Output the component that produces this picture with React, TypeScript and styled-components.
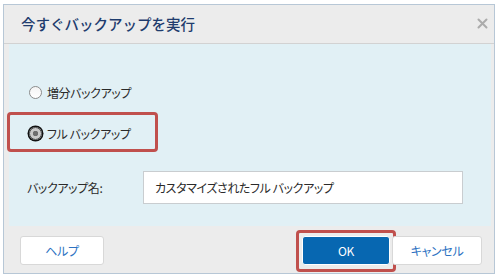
import React from 'react';
import styled, { createGlobalStyle } from 'styled-components';

const GlobalStyle = createGlobalStyle`
  html, body {
    margin: 0;
    padding: 0;
    background: #ffffff;
  }
  body {
    font-family: "Noto Sans CJK JP", "Noto Sans", sans-serif;
  }
`;

const Page = styled.div`
  width: 499px;
  height: 278px;
  padding: 4px 0 0 3px;
  box-sizing: border-box;
`;

const Dialog = styled.div`
  width: 492px;
  height: 270px;
  box-sizing: border-box;
  border: 1px solid #b7c7d6;
  background: #ececec;
  display: flex;
  flex-direction: column;
`;

const Header = styled.div`
  height: 38px;
  border-bottom: 1px solid #d2d2d2;
  display: flex;
  align-items: center;
  justify-content: space-between;
  padding: 0 6px 0 17px;
`;

const Title = styled.div`
  font-size: 14.5px;
  font-weight: 500;
  color: #1f3c6e;
  margin-top: -2px;
`;

const CloseIcon = styled.svg`
  width: 11px;
  height: 11px;
  margin-top: -2px;
`;

const Body = styled.div`
  height: 182px;
  margin: 0 3px 0 5px;
  background: #e1f0f5;
  display: flex;
  flex-direction: column;
  align-items: flex-start;
  font-size: 12px;
  letter-spacing: -0.4px;
  color: #2a2a2a;
  font-feature-settings: "palt";
`;

const RadioRow = styled.label<{ $top: number }>`
  position: relative;
  display: flex;
  align-items: center;
  height: 20px;
  margin-top: ${p => p.$top}px;
  padding-left: 20px;
  gap: 5px;
`;

const RadioDot = styled.span<{ $checked?: boolean }>`
  width: 13px;
  height: 13px;
  box-sizing: border-box;
  border-radius: 50%;
  border: 1px solid ${p => (p.$checked ? '#444' : '#8c8c8c')};
  background: ${p =>
    p.$checked
      ? 'radial-gradient(circle, #6e6e6e 0 2.5px, #c9c9c9 3px 100%)'
      : 'linear-gradient(#f4f4f4, #ffffff)'};
  box-shadow: ${p => (p.$checked ? '0 0 0 1.5px #111' : 'none')};
`;

const Highlight = styled.span<{ $l: number; $t: number; $w: number; $h: number }>`
  position: absolute;
  left: ${p => p.$l}px;
  top: ${p => p.$t}px;
  width: ${p => p.$w}px;
  height: ${p => p.$h}px;
  box-sizing: border-box;
  border: 3px solid #c0504d;
  border-radius: 4px;
  pointer-events: none;
`;

const NameRow = styled.div`
  display: flex;
  align-items: center;
  margin-top: 28px;
  padding-left: 18px;
`;

const NameLabel = styled.span`
  width: 116px;
`;

const NameInput = styled.div`
  width: 320px;
  height: 33px;
  box-sizing: border-box;
  border: 1px solid #c9cdd0;
  background: #fff;
  display: flex;
  align-items: center;
  padding-left: 11px;
`;

const Footer = styled.div`
  flex: 1;
  display: flex;
  align-items: flex-start;
  padding: 10px 12px 0 14px;
  font-feature-settings: "palt";
  letter-spacing: -0.3px;
`;

const Spacer = styled.div`
  flex: 1;
`;

const Button = styled.div<{ $primary?: boolean; $w: number }>`
  position: relative;
  width: ${p => p.$w}px;
  height: 29px;
  box-sizing: border-box;
  border: 1px solid ${p => (p.$primary ? '#ffffff' : '#d8d8d8')};
  border-radius: 3px;
  background: ${p => (p.$primary ? '#0767b1' : '#ffffff')};
  color: ${p => (p.$primary ? '#ffffff' : '#2d72c2')};
  font-size: 12px;
  display: flex;
  align-items: center;
  justify-content: center;
  margin-left: ${p => (p.$primary ? 0 : 2)}px;
  padding-bottom: 1px;
`;

const App: React.FC = () => {
  return (
    <Page>
      <GlobalStyle />
      <Dialog>
        <Header>
          <Title>今すぐバックアップを実行</Title>
          <CloseIcon viewBox="0 0 11 11">
            <path d="M1.5 1.5 L9.5 9.5 M9.5 1.5 L1.5 9.5" stroke="#ababab" strokeWidth="2" strokeLinecap="round" />
          </CloseIcon>
        </Header>
        <Body>
          <RadioRow $top={38}>
            <RadioDot />
            <span>増分バックアップ</span>
          </RadioRow>
          <RadioRow $top={21}>
            <RadioDot $checked />
            <span>フル バックアップ</span>
            <Highlight $l={-2} $t={-11} $w={151} $h={40} />
          </RadioRow>
          <NameRow>
            <NameLabel>バックアップ名:</NameLabel>
            <NameInput>カスタマイズされたフル バックアップ</NameInput>
          </NameRow>
        </Body>
        <Footer>
          <Button $w={84}>ヘルプ</Button>
          <Spacer />
          <Button $primary $w={88}>
            OK
            <Highlight $l={-7} $t={-7} $w={100} $h={42} />
          </Button>
          <Button $w={90}>キャンセル</Button>
        </Footer>
      </Dialog>
    </Page>
  );
};

export default App;
